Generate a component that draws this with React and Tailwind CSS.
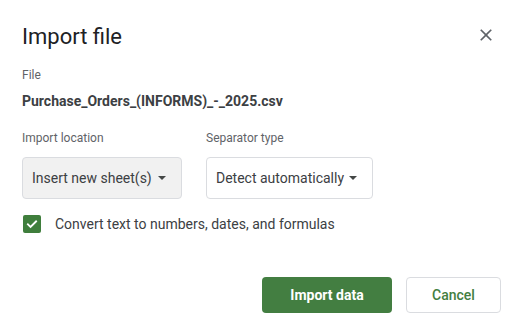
export default function App() {
  const font = { fontFamily: 'Roboto, "Noto Sans", Arial, sans-serif' };
  return (
    <div
      className="w-[520px] h-[333px] bg-white pl-[22px] pr-[19px] flex flex-col overflow-hidden"
      style={font}
    >
      <div className="flex justify-between items-start mt-[23px]">
        <div className="text-[22px] leading-[28px] text-[#202124]">Import file</div>
        <svg width="20" height="20" viewBox="0 0 24 24" className="mt-[2px] mr-[5px]" fill="#5f6368">
          <path d="M19 6.41L17.59 5 12 10.59 6.41 5 5 6.41 10.59 12 5 17.59 6.41 19 12 13.41 17.59 19 19 17.59 13.41 12z" />
        </svg>
      </div>
      <div className="mt-[16px] text-[12px] leading-[16px] text-[#5f6368]">File</div>
      <div className="mt-[8px] text-[14px] leading-[20px] font-bold text-[#3c4043]">
        Purchase_Orders_(INFORMS)_-_2025.csv
      </div>
      <div className="mt-[19px] flex gap-[24px]">
        <div className="flex flex-col w-[160px]">
          <div className="text-[12px] leading-[16px] text-[#5f6368]">Import location</div>
          <div className="mt-[11px] h-[42px] flex items-center justify-between pl-[9px] pr-[15px] rounded-[4px] border border-[#dadce0] bg-[#f1f1f1] text-[14px] text-[#3c4043] whitespace-nowrap">
            <span>Insert new sheet(s)</span>
            <svg width="8" height="4" viewBox="0 0 8 4" fill="#444746"><path d="M0 0h8L4 4z" /></svg>
          </div>
        </div>
        <div className="flex flex-col w-[167px]">
          <div className="text-[12px] leading-[16px] text-[#5f6368]">Separator type</div>
          <div className="mt-[11px] h-[42px] flex items-center justify-between pl-[9px] pr-[15px] rounded-[4px] border border-[#dadce0] bg-white text-[14px] text-[#3c4043] whitespace-nowrap">
            <span>Detect automatically</span>
            <svg width="8" height="4" viewBox="0 0 8 4" fill="#444746"><path d="M0 0h8L4 4z" /></svg>
          </div>
        </div>
      </div>
      <div className="mt-[16px] flex items-center h-[18px]">
        <div className="ml-[1px] w-[18px] h-[18px] rounded-[2px] bg-[#3f7e3c] flex items-center justify-center">
          <svg width="14" height="14" viewBox="0 0 24 24" fill="none" stroke="white" strokeWidth="3.2" strokeLinecap="square">
            <path d="M5 12.5l4.5 4.5L19 7.5" />
          </svg>
        </div>
        <span className="ml-[14px] text-[14px] text-[#3c4043]">Convert text to numbers, dates, and formulas</span>
      </div>
      <div className="mt-[44px] flex justify-end gap-[14px]">
        <div className="w-[130px] h-[36px] rounded-[4px] bg-[#437e41] text-white text-[14px] font-bold flex items-center justify-center">
          Import data
        </div>
        <div className="w-[95px] h-[36px] rounded-[4px] border border-[#dadce0] bg-white text-[#437e41] text-[14px] font-medium flex items-center justify-center">
          Cancel
        </div>
      </div>
    </div>
  );
}
